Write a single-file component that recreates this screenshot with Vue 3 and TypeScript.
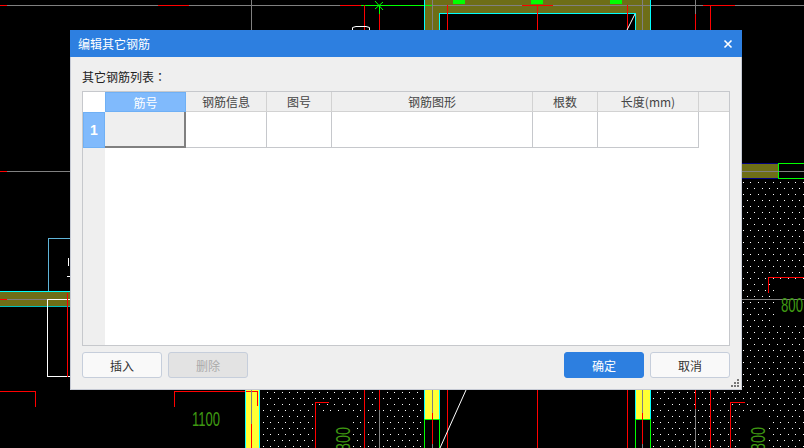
<script setup lang="ts">
type Seg = [number, number, number, number, string];

const red = '#ff0000';
const grey = '#808080';
const green = '#00ff00';
const cyan = '#00ffff';
const white = '#ffffff';

const segs: Seg[] = [
  [0, 5.5, 430, 5.5, grey],
  [0, 5.5, 7, 5.5, red],
  [158, 5.5, 189, 5.5, red],
  [340, 5.5, 361, 5.5, red],
  [361, 5.5, 435, 5.5, green],
  [432, 5.5, 650, 5.5, grey],
  [522, 5.5, 553, 5.5, red],
  [650, 5.5, 804, 5.5, grey],
  [703, 5.5, 735, 5.5, red],
  [251.5, 0, 251.5, 30, grey],
  [364.5, 5, 364.5, 30, red],
  [379.5, 5, 379.5, 14, green],
  [379.5, 14, 379.5, 30, red],
  [424.5, 0, 424.5, 30, cyan],
  [650.5, 0, 650.5, 30, cyan],
  [432.5, 0, 432.5, 30, grey],
  [642.5, 0, 642.5, 30, grey],
  [447.5, 5, 447.5, 30, red],
  [537.5, 5, 537.5, 30, red],
  [627.5, 5, 627.5, 30, red],
  [695.5, 0, 695.5, 14, grey],
  [695.5, 14, 695.5, 30, red],
  [710.5, 5, 710.5, 30, red],
  [0, 171.5, 70, 171.5, grey],
  [0, 171.5, 7, 171.5, red],
  [742, 163.5, 778, 163.5, '#000080'],
  [742, 178.5, 778, 178.5, '#000080'],
  [778, 163.5, 804, 163.5, green],
  [778, 178.5, 804, 178.5, green],
  [778.5, 163, 778.5, 179, green],
  [742, 171.5, 804, 171.5, grey],
  [48.5, 238, 48.5, 291, '#5fb4d8'],
  [48, 238.5, 70, 238.5, '#5fb4d8'],
  [0, 291.5, 70, 291.5, cyan],
  [0, 306.5, 70, 306.5, '#00c0c0'],
  [0, 299.5, 70, 299.5, grey],
  [0, 299.5, 7, 299.5, red],
  [47.5, 299, 47.5, 377, white],
  [47, 299.5, 70, 299.5, white],
  [47, 376.5, 70, 376.5, white],
  [67.5, 293, 67.5, 377, red],
  [68.5, 258, 68.5, 266, white],
  [67, 276.5, 70, 276.5, white],
  [742, 299.5, 804, 299.5, grey],
  [768.5, 277, 768.5, 293, red],
  [768, 277.5, 804, 277.5, red],
  [0, 391.5, 36, 391.5, red],
  [35.5, 391, 35.5, 407, red],
  [174.5, 391, 174.5, 407, red],
  [174, 391.5, 258, 391.5, red],
  [257.5, 391, 257.5, 406, red],
  [245.5, 390, 245.5, 448, cyan],
  [259.5, 390, 259.5, 448, cyan],
  [251.5, 390, 251.5, 448, grey],
  [251.5, 424, 251.5, 448, red],
  [315.5, 402, 315.5, 448, red],
  [315, 402.5, 329, 402.5, red],
  [364.5, 390, 364.5, 448, red],
  [379.5, 390, 379.5, 410, red],
  [379.5, 410, 379.5, 448, grey],
  [424.5, 390, 424.5, 419, cyan],
  [439.5, 390, 439.5, 419, cyan],
  [424.5, 419, 424.5, 448, green],
  [439.5, 419, 439.5, 448, green],
  [424, 419.5, 440, 419.5, green],
  [432.5, 390, 432.5, 448, grey],
  [432.5, 413, 432.5, 444, red],
  [447.5, 390, 447.5, 448, red],
  [537.5, 390, 537.5, 448, red],
  [627.5, 390, 627.5, 448, red],
  [635.5, 390, 635.5, 419, cyan],
  [650.5, 390, 650.5, 419, cyan],
  [635.5, 419, 635.5, 448, green],
  [650.5, 419, 650.5, 448, green],
  [635, 419.5, 651, 419.5, green],
  [642.5, 390, 642.5, 448, grey],
  [642.5, 413, 642.5, 444, red],
  [695.5, 390, 695.5, 409, red],
  [695.5, 409, 695.5, 448, grey],
  [710.5, 390, 710.5, 448, red],
  [730.5, 402, 730.5, 448, red],
  [730, 402.5, 745, 402.5, red]
];

const columns = ['钢筋信息', '图号', '钢筋图形', '根数', '长度(mm)'];
const gripDots = [
  [6, 0],
  [3, 3],
  [6, 3],
  [0, 6],
  [3, 6],
  [6, 6]
];
</script>

<template>
  <div class="desktop">
    <svg class="cad" width="804" height="448" viewBox="0 0 804 448">
      <defs>
        <pattern id="dots" width="15" height="12" patternUnits="userSpaceOnUse">
          <rect x="0" y="2" width="1" height="1" fill="#fff" />
          <rect x="8" y="2" width="1" height="1" fill="#fff" />
          <rect x="4" y="8" width="1" height="1" fill="#fff" />
          <rect x="12" y="8" width="1" height="1" fill="#fff" />
        </pattern>
      </defs>
      <rect x="425" y="0" width="225" height="30" fill="#6e6e17" />
      <rect x="440" y="14" width="195" height="16" fill="#000" />
      <rect x="453" y="0" width="12" height="4" fill="#00ff00" />
      <rect x="531" y="0" width="12" height="4" fill="#00ff00" />
      <rect x="610" y="0" width="12" height="4" fill="#00ff00" />
      <path d="M439.5 30V13.5H635.5V30" fill="none" stroke="#00ffff" shape-rendering="crispEdges" />
      <rect x="742" y="164" width="36" height="14" fill="#6e6e17" />
      <rect x="0" y="292" width="70" height="14" fill="#6e6e17" />
      <rect x="742" y="179" width="62" height="269" fill="url(#dots)" />
      <rect x="260" y="390" width="165" height="58" fill="url(#dots)" />
      <rect x="651" y="390" width="153" height="58" fill="url(#dots)" />
      <rect x="317" y="415" width="36" height="33" fill="#000" />
      <rect x="740" y="412" width="28" height="36" fill="#000" />
      <rect x="774" y="283" width="30" height="39" fill="#000" />
      <rect x="246" y="390" width="13" height="58" fill="#ffff33" />
      <rect x="425" y="390" width="14" height="29" fill="#ffff33" />
      <rect x="636" y="390" width="14" height="29" fill="#ffff33" />
      <g shape-rendering="crispEdges">
        <line
          v-for="(s, i) in segs"
          :key="i"
          :x1="s[0]"
          :y1="s[1]"
          :x2="s[2]"
          :y2="s[3]"
          :stroke="s[4]"
        />
      </g>
      <path d="M635 14L627 30M466 390L440 448" stroke="#fff" fill="none" />
      <path d="M352.5 30V27.5L356 26.5H366L369.5 27.5V30" stroke="#fff" fill="none" />
      <path d="M375 1L383 10M383 2L375 9" stroke="#00ff00" fill="none" />
      <g class="cad-text">
        <text x="192" y="426" textLength="28" lengthAdjust="spacingAndGlyphs">1100</text>
        <text x="781" y="312" textLength="22" lengthAdjust="spacingAndGlyphs">800</text>
        <text transform="translate(350 451) rotate(-90)" textLength="24" lengthAdjust="spacingAndGlyphs">800</text>
        <text transform="translate(765 451) rotate(-90)" textLength="24" lengthAdjust="spacingAndGlyphs">800</text>
      </g>
    </svg>

    <div class="dialog">
      <div class="title-bar">
        <span>编辑其它钢筋</span>
        <svg class="close" width="10" height="10" viewBox="0 0 10 10">
          <path d="M1.5 1.5L8.5 8.5M8.5 1.5L1.5 8.5" stroke="#fff" stroke-width="1.6" fill="none" />
        </svg>
      </div>
      <div class="body">
        <div class="list-label">其它钢筋列表<span class="colon">：</span></div>
        <div class="grid">
          <div class="corner"></div>
          <div class="head head-active">筋号</div>
          <div v-for="col in columns" :key="col" class="head">{{ col }}</div>
          <div class="head head-rest"></div>

          <div class="row-no">1</div>
          <div class="cell cell-current"></div>
          <div v-for="col in columns" :key="col" class="cell"></div>
          <div class="cell-rest"></div>

          <div class="gutter"></div>
          <div class="blank"></div>
        </div>
        <div class="actions">
          <button class="btn">插入</button>
          <button class="btn btn-disabled">删除</button>
          <span class="spacer"></span>
          <button class="btn btn-primary">确定</button>
          <button class="btn">取消</button>
        </div>
      </div>
      <svg class="grip" width="8" height="8" viewBox="0 0 8 8">
        <rect v-for="(d, i) in gripDots" :key="i" :x="d[0]" :y="d[1]" width="2" height="2" fill="#777" />
      </svg>
    </div>
  </div>
</template>

<style scoped>
.desktop {
  position: relative;
  width: 804px;
  height: 448px;
  background: #000;
  overflow: hidden;
  font-family: "Noto Sans CJK SC", "Liberation Sans", sans-serif;
  font-size: 12px;
}

.cad {
  position: absolute;
  left: 0;
  top: 0;
}

.cad-text {
  font-family: "Liberation Sans", sans-serif;
  font-size: 21px;
  fill: #3f9a12;
}

.dialog {
  position: absolute;
  left: 70px;
  top: 30px;
  width: 672px;
  height: 360px;
  box-sizing: border-box;
  display: flex;
  flex-direction: column;
  background: #efefef;
  border: 1px solid #c6cad4;
  border-top: 0;
}

.title-bar {
  height: 27px;
  margin: 0 -1px;
  padding: 0 9px 0 8px;
  flex-shrink: 0;
  display: flex;
  align-items: center;
  justify-content: space-between;
  background: #2d7fe0;
  color: #fff;
}

.close {
  display: block;
}

.body {
  flex: 1;
  min-height: 0;
  padding: 0 11px 11px;
  display: flex;
  flex-direction: column;
}

.list-label {
  height: 34px;
  line-height: 40px;
  color: #222;
  flex-shrink: 0;
}

.colon {
  font-family: "Noto Sans CJK TC", sans-serif;
}

.grid {
  height: 255px;
  box-sizing: border-box;
  border: 1px solid #c6c8cc;
  display: grid;
  grid-template-columns: 22px 81px 81px 65px 201px 65px 101px 1fr;
  grid-template-rows: 20px 36px 1fr;
  background: #fff;
}

.corner {
  background: #fff;
}

.head {
  display: flex;
  align-items: center;
  justify-content: center;
  box-sizing: border-box;
  background: #efefef;
  border-right: 1px solid #d2d2d2;
  border-bottom: 1px solid #d2d2d2;
  color: #444;
}

.head-active {
  background: #80bafc;
  border: 1px solid #6fb0f5;
  color: #fff;
}

.head-rest {
  border-right: 0;
}

.row-no {
  display: flex;
  align-items: center;
  justify-content: center;
  box-sizing: border-box;
  background: #80bafc;
  border: 1px solid #6fb0f5;
  color: #fff;
  font-family: "Liberation Sans", sans-serif;
  font-size: 14px;
  font-weight: 700;
}

.cell {
  box-sizing: border-box;
  background: #fff;
  border-right: 1px solid #c6c8cc;
  border-bottom: 1px solid #c6c8cc;
}

.cell-current {
  background: #efefef;
  border-right: 2px solid #808080;
  border-bottom: 2px solid #808080;
}

.cell-rest {
  background: #fff;
}

.gutter {
  background: #efefef;
}

.blank {
  grid-column: 2 / -1;
  background: #fff;
}

.actions {
  margin-top: 6px;
  display: flex;
  gap: 6px;
}

.spacer {
  flex: 1;
}

.btn {
  width: 80px;
  height: 26px;
  box-sizing: border-box;
  padding: 0;
  border: 1px solid #c6cedb;
  border-radius: 3px;
  background: #f9f9f9;
  color: #333;
  font: inherit;
}

.btn-disabled {
  background: #e3e3e3;
  color: #aaa;
}

.btn-primary {
  background: #2d7fe0;
  border-color: #2d7fe0;
  color: #fff;
}

.grip {
  position: absolute;
  right: 2px;
  bottom: 2px;
}
</style>
